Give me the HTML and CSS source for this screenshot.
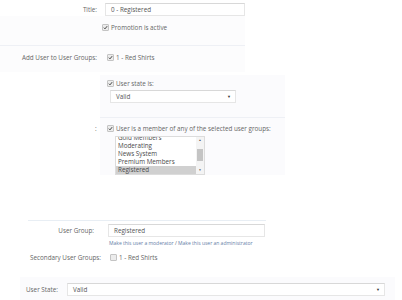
FILE: index.html
```html
<!DOCTYPE html>
<html lang="en">
<head>
    <meta charset="UTF-8">
    <meta name="viewport" content="width=device-width, initial-scale=1.0">
    <title>User Group Promotion</title>
    <link rel="stylesheet" href="styles.css">
</head>
<body>
    <!-- Promotion details -->
    <div class="panel-a">
        <div class="row row-title">
            <span class="label">Title:</span>
            <div class="text-input title-input">0 - Registered</div>
        </div>
        <div class="row row-check">
            <span class="label"></span>
            <span class="cb checked"><svg viewBox="0 0 6 6"><path d="M1 3.2 L2.4 4.6 L5 1.4" /></svg></span>
            <span>Promotion is active</span>
        </div>
        <div class="sep"></div>
        <div class="row row-add">
            <span class="label">Add User to User Groups:</span>
            <span class="cb checked"><svg viewBox="0 0 6 6"><path d="M1 3.2 L2.4 4.6 L5 1.4" /></svg></span>
            <span>1 - Red Shirts</span>
        </div>
    </div>

    <!-- Criteria -->
    <div class="panel-b">
        <div class="crit-head">
            <span class="cb checked"><svg viewBox="0 0 6 6"><path d="M1 3.2 L2.4 4.6 L5 1.4" /></svg></span>
            <span>User state is:</span>
        </div>
        <div class="select state-select">
            <span>Valid</span>
            <span class="arrow">&#9660;</span>
        </div>
    </div>

    <div class="panel-c">
        <div class="crit-head">
            <span class="colon">:</span>
            <span class="cb checked"><svg viewBox="0 0 6 6"><path d="M1 3.2 L2.4 4.6 L5 1.4" /></svg></span>
            <span>User is a member of any of the selected user groups:</span>
        </div>
        <div class="listbox">
            <div class="list-items">
                <div class="item">Gold Members</div>
                <div class="item">Moderating</div>
                <div class="item">News System</div>
                <div class="item">Premium Members</div>
                <div class="item selected">Registered</div>
            </div>
            <div class="scrollbar">
                <span class="sb-arrow">&#9650;</span>
                <span class="sb-track"><span class="sb-thumb"></span></span>
                <span class="sb-arrow">&#9660;</span>
            </div>
        </div>
    </div>

    <!-- User edit -->
    <div class="panel-d">
        <div class="row row-group">
            <span class="label">User Group:</span>
            <div class="text-input group-input">Registered</div>
        </div>
        <div class="links">
            <a href="#">Make this user a moderator</a> / <a href="#">Make this user an administrator</a>
        </div>
        <div class="row row-secondary">
            <span class="label">Secondary User Groups:</span>
            <span class="cb"></span>
            <span>1 - Red Shirts</span>
        </div>
    </div>

    <div class="panel-e">
        <span class="label-state">User State:</span>
        <div class="select wide-select">
            <span>Valid</span>
            <span class="arrow">&#9660;</span>
        </div>
    </div>
</body>
</html>
```

FILE: styles.css
```css
/* Global */
body {
    margin: 0;
    font-family: 'Open Sans', 'Liberation Sans', sans-serif;
    font-size: 6.3px;
    color: #666;
    background: #fff;
    width: 402px;
    height: 300px;
    overflow: hidden;
}

.row {
    display: flex;
    align-items: center;
}

.label {
    width: 97px;
    padding-right: 8px;
    text-align: right;
    flex-shrink: 0;
}

/* Checkbox */
.cb {
    width: 5px;
    height: 5px;
    border: 1px solid #c4c4c4;
    border-radius: 1px;
    background: #ececec;
    margin-right: 2px;
    display: inline-flex;
    flex-shrink: 0;
}

.cb svg {
    width: 5px;
    height: 5px;
}

.cb path {
    fill: none;
    stroke: #444;
    stroke-width: 1.2;
}

.text-input,
.select {
    box-sizing: border-box;
    height: 13px;
    border: 1px solid #e6e6e6;
    border-top-color: #d8d8d8;
    background: #fff;
    display: flex;
    align-items: center;
    padding-left: 5px;
    color: #555;
}

.select {
    justify-content: space-between;
    padding-right: 4px;
}

.arrow {
    font-size: 4px;
    color: #333;
}

/* Promotion details */
.panel-a {
    width: 245px;
    height: 72px;
    background: linear-gradient(to bottom, #fff 15px, #fcfcfd 15px);
}

.row-title {
    padding-top: 3px;
    background: #fff;
}

.title-input {
    width: 140px;
}

.row-check {
    height: 10px;
    margin-top: 6px;
}

.row-check .label {
    width: 100px;
    padding-right: 2px;
}

.sep {
    height: 1px;
    background: #eef0f5;
    margin-top: 13px;
}

.row-add {
    margin-top: 6px;
    height: 10px;
}

.row-add .label {
    width: 97px;
    padding-right: 10px;
}

/* Criteria */
.panel-b {
    margin-left: 100px;
    margin-top: 3px;
    width: 185px;
    height: 43px;
    box-sizing: border-box;
    padding: 3px 0 0 7px;
    background: #fbfbfd;
    border-bottom: 1px solid #eef0f5;
}

.crit-head {
    display: flex;
    align-items: center;
    height: 10px;
}

.state-select {
    width: 126px;
    margin: 2px 0 0 3px;
}

.panel-c {
    margin-left: 95px;
    width: 190px;
    height: 57px;
    box-sizing: border-box;
    padding-top: 5px;
    background: linear-gradient(to right, #fff 5px, #fbfbfd 5px);
}

.colon {
    width: 12px;
}

.listbox {
    margin: 3px 0 0 20px;
    width: 90px;
    height: 39px;
    box-sizing: border-box;
    border: 1px solid #dcdcdc;
    background: #fff;
    display: flex;
    overflow: hidden;
}

.list-items {
    flex: 1;
    margin-top: -3px;
}

.item {
    height: 8px;
    line-height: 8px;
    padding-left: 2px;
    color: #4a4a4a;
}

.item.selected {
    background: #d0d0d0;
}

.scrollbar {
    width: 8px;
    display: flex;
    flex-direction: column;
    background: #f4f4f4;
}

.sb-arrow {
    height: 7px;
    font-size: 3px;
    color: #555;
    text-align: center;
    line-height: 7px;
}

.sb-track {
    flex: 1;
    padding-top: 5px;
}

.sb-thumb {
    display: block;
    margin: 0 1px;
    height: 12px;
    background: #c4c4c4;
}

/* User edit */
.panel-d {
    margin: 45px 0 0 28px;
    width: 238px;
    border-top: 1px solid #e8eef4;
    padding-top: 3px;
}

.row-group .label {
    width: 66px;
    padding-right: 14px;
}

.group-input {
    width: 157px;
}

.links {
    margin: 3px 0 0 81px;
    font-size: 5px;
}

.links a {
    color: #6680a8;
    text-decoration: none;
}

.row-secondary {
    margin-top: 6px;
    height: 10px;
}

.row-secondary .label {
    width: 73px;
    padding-right: 9px;
}

.panel-e {
    margin: 15px 0 0 20px;
    width: 375px;
    height: 26px;
    box-sizing: border-box;
    padding: 6px 0 0 6px;
    background: #fbfbfd;
    display: flex;
    align-items: flex-start;
}

.label-state {
    width: 41px;
    line-height: 13px;
}

.wide-select {
    width: 318px;
}
```
